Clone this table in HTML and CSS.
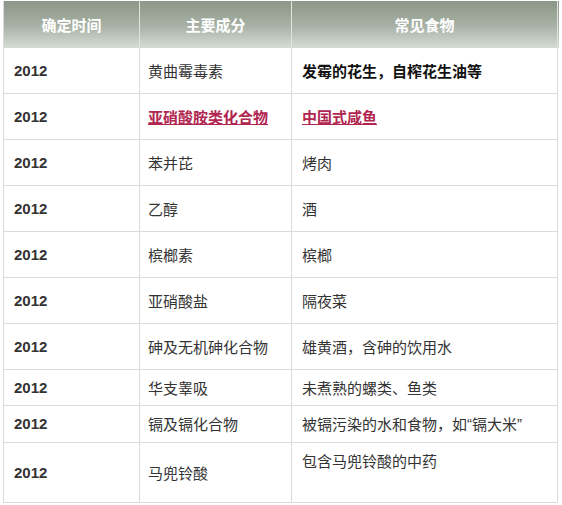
FILE: index.html
```html
<!DOCTYPE html>
<html lang="zh-CN">
<head>
<meta charset="utf-8">
<title>致癌物列表</title>
<link rel="stylesheet" href="styles.css">
</head>
<body>
<div class="table">
  <div class="row head">
    <div class="cell">确定时间</div>
    <div class="cell">主要成分</div>
    <div class="cell">常见食物</div>
  </div>
  <div class="row">
    <div class="cell year">2012</div>
    <div class="cell">黄曲霉毒素</div>
    <div class="cell strong">发霉的花生，自榨花生油等</div>
  </div>
  <div class="row">
    <div class="cell year">2012</div>
    <div class="cell"><a class="link" href="#">亚硝酸胺类化合物</a></div>
    <div class="cell"><a class="link" href="#">中国式咸鱼</a></div>
  </div>
  <div class="row">
    <div class="cell year">2012</div>
    <div class="cell">苯并芘</div>
    <div class="cell">烤肉</div>
  </div>
  <div class="row">
    <div class="cell year">2012</div>
    <div class="cell">乙醇</div>
    <div class="cell">酒</div>
  </div>
  <div class="row">
    <div class="cell year">2012</div>
    <div class="cell">槟榔素</div>
    <div class="cell">槟榔</div>
  </div>
  <div class="row">
    <div class="cell year">2012</div>
    <div class="cell">亚硝酸盐</div>
    <div class="cell">隔夜菜</div>
  </div>
  <div class="row">
    <div class="cell year">2012</div>
    <div class="cell">砷及无机砷化合物</div>
    <div class="cell">雄黄酒，含砷的饮用水</div>
  </div>
  <div class="row short">
    <div class="cell year">2012</div>
    <div class="cell">华支睾吸</div>
    <div class="cell">未煮熟的螺类、鱼类</div>
  </div>
  <div class="row short2">
    <div class="cell year">2012</div>
    <div class="cell">镉及镉化合物</div>
    <div class="cell">被镉污染的水和食物，如<span class="q">“</span>镉大米<span class="q">”</span></div>
  </div>
  <div class="row tall">
    <div class="cell year">2012</div>
    <div class="cell">马兜铃酸</div>
    <div class="cell top">包含马兜铃酸的中药</div>
  </div>
</div>
</body>
</html>
```
FILE: styles.css
```css
html, body {
  margin: 0;
  padding: 0;
  background: #ffffff;
}
body {
  padding: 1px 0 0 3px;
  font-family: "Noto Sans CJK SC", "Liberation Sans", sans-serif;
  font-size: 15px;
  color: #333333;
}
.table {
  width: 555px;
  border-left: 1px solid #dcdadf;
  display: flex;
  flex-direction: column;
}
.row {
  display: grid;
  grid-template-columns: 136px 152px 266px;
  height: 46px;
}
.row.short { height: 36px; }
.row.short2 { height: 37px; }
.row.tall { height: 60px; }
.cell {
  display: flex;
  align-items: center;
  padding-left: 10px;
  border-right: 1px solid #dcdadf;
  border-bottom: 1px solid #dcdadf;
  line-height: 20px;
  white-space: nowrap;
}
.cell:nth-child(2) { padding-left: 8px; }
.head {
  height: 47px;
  background: linear-gradient(to bottom, #8b9788 0%, #a6afa3 50%, #d6dcd4 100%);
}
.head .cell {
  justify-content: center;
  padding-left: 0;
  color: #ffffff;
  font-weight: bold;
  font-size: 15px;
  border-right-color: #dfe4dd;
  border-bottom: none;
}
.year {
  font-family: "Liberation Sans", Arial, sans-serif;
  font-weight: bold;
  color: #333333;
}
.strong {
  font-weight: bold;
  color: #111111;
}
.link {
  color: #b02650;
  font-weight: bold;
  text-decoration: underline;
}
.q {
  font-family: "Liberation Sans", Arial, sans-serif;
}
.top {
  align-items: flex-start;
  padding-top: 8px;
}
```
